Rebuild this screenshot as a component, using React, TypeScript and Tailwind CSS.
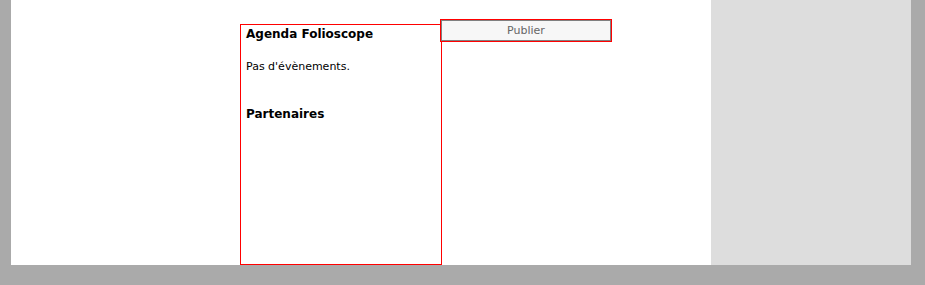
export default function App() {
  return (
    <div className="flex h-[285px] w-[925px] bg-[#aaaaaa]" style={{ fontFamily: '"DejaVu Sans", Verdana, sans-serif' }}>
      <div className="ml-[11px] flex h-[265px] w-[900px]">
        <div className="flex h-full w-[700px] bg-white">
          <div className="ml-[229px] mt-[24px] box-border h-[241px] w-[202px] border border-[#ff0000] px-[5px] pt-[1px]">
            <div className="text-[12px] font-bold leading-[16px] text-black">Agenda Folioscope</div>
            <div className="mt-[18px] text-[11px] leading-[14px] text-black">Pas d'évènements.</div>
            <div className="mt-[32px] text-[12px] font-bold leading-[16px] text-black">Partenaires</div>
          </div>
          <div className="ml-[-2px] mt-[19px] box-border flex h-[23px] w-[172px] items-center justify-center border border-[#ff0000] bg-[#f7f7f7] pt-[2px] text-[11px] text-[#666666] shadow-[inset_0_0_0_1px_#808080]">
            Publier
          </div>
        </div>
        <div className="h-full w-[200px] bg-[#dddddd]" />
      </div>
    </div>
  );
}
